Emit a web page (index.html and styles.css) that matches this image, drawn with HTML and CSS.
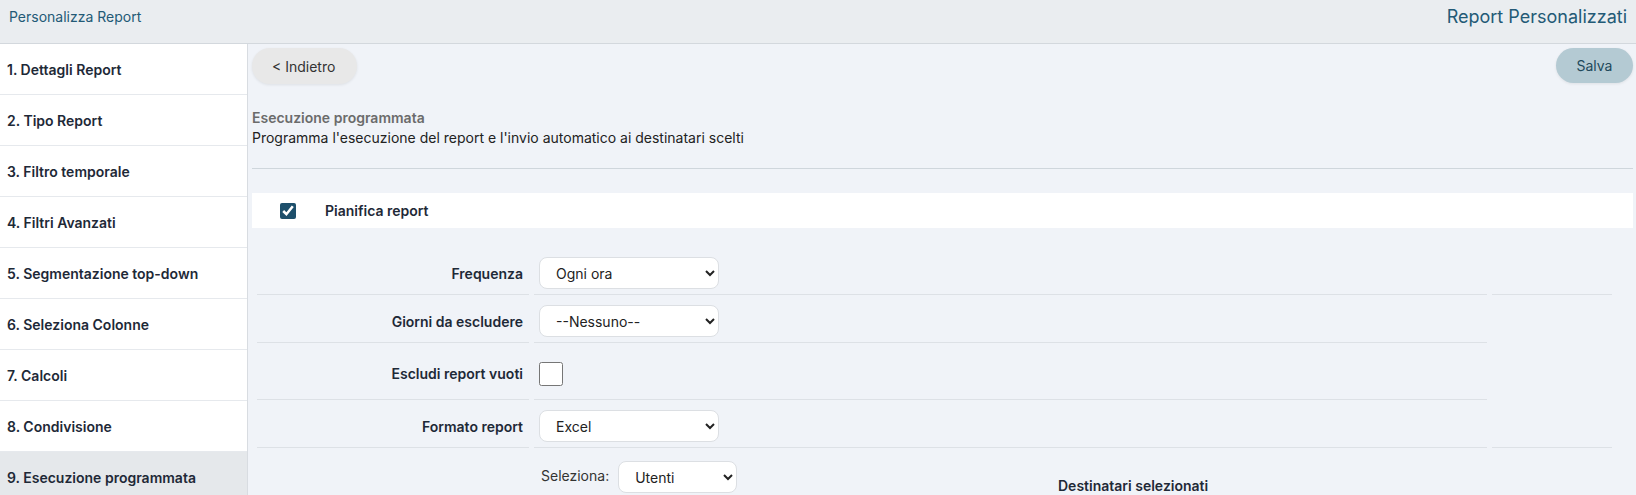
FILE: index.html
```html
<!DOCTYPE html>
<html lang="it">
<head>
    <meta charset="UTF-8">
    <title>Report Personalizzati</title>
    <link rel="stylesheet" href="styles.css">
</head>
<body>
<header class="topbar">
    <span class="crumb">Personalizza Report</span>
    <span class="page-title">Report Personalizzati</span>
</header>
<div class="layout">
    <nav class="steps">
        <ul>
            <li>1. Dettagli Report</li>
            <li>2. Tipo Report</li>
            <li>3. Filtro temporale</li>
            <li>4. Filtri Avanzati</li>
            <li>5. Segmentazione top-down</li>
            <li>6. Seleziona Colonne</li>
            <li>7. Calcoli</li>
            <li>8. Condivisione</li>
            <li class="selected">9. Esecuzione programmata</li>
        </ul>
    </nav>
    <main class="panel">
        <div class="actions">
            <button class="btn-back">&lt; Indietro</button>
            <button class="btn-save">Salva</button>
        </div>
        <div class="section-head">
            <div class="section-title">Esecuzione programmata</div>
            <div class="section-desc">Programma l'esecuzione del report e l'invio automatico ai destinatari scelti</div>
        </div>
        <hr class="divider">
        <div class="plan-row">
            <input type="checkbox" id="pianifica" class="plan-check" checked>
            <label for="pianifica">Pianifica report</label>
        </div>
        <table class="sched">
            <colgroup>
                <col class="c-lbl">
                <col class="c-val">
                <col class="c-extra">
            </colgroup>
            <tr>
                <td class="lbl">Frequenza</td>
                <td class="val">
                    <select class="sel">
                        <option>Ogni ora</option>
                        <option>Ogni giorno</option>
                        <option>Ogni settimana</option>
                    </select>
                </td>
                <td class="extra"></td>
            </tr>
            <tr>
                <td class="lbl">Giorni da escludere</td>
                <td class="val">
                    <select class="sel">
                        <option>--Nessuno--</option>
                        <option>Sabato e domenica</option>
                    </select>
                </td>
                <td class="extra" rowspan="3"></td>
            </tr>
            <tr class="row-check">
                <td class="lbl">Escludi report vuoti</td>
                <td class="val"><input type="checkbox" class="big-check"></td>
            </tr>
            <tr>
                <td class="lbl">Formato report</td>
                <td class="val">
                    <select class="sel">
                        <option>Excel</option>
                        <option>PDF</option>
                        <option>CSV</option>
                    </select>
                </td>
            </tr>
            <tr>
                <td class="empty"></td>
                <td class="recipients" colspan="2">
                    <div class="pick">
                        <div class="pick-left">
                            <span>Seleziona:</span>
                            <select class="sel sel-small">
                                <option>Utenti</option>
                                <option>Gruppi</option>
                            </select>
                        </div>
                        <div class="pick-right">Destinatari selezionati</div>
                    </div>
                </td>
            </tr>
        </table>
    </main>
</div>
</body>
</html>
```

FILE: styles.css
```css
*{
    margin: 0;
    padding: 0;
    box-sizing: border-box;
}
html,body{
    height: 100%;
}
body{
    font-family: Inter, "Liberation Sans", sans-serif;
    font-size: 14px;
    color: #1f2937;
    background: #f0f3f8;
    overflow: hidden;
}
ul{
    list-style: none;
}

/* barra in alto */
.topbar{
    height: 44px;
    background: #eaedf0;
    border-bottom: 1px solid #d3d8dd;
    display: flex;
    justify-content: space-between;
    align-items: center;
    padding: 0 9px 10px 9px;
}
.crumb{
    color: #235a76;
    font-size: 14px;
}
.page-title{
    color: #235a76;
    font-size: 18px;
}

.layout{
    display: flex;
    height: calc(100% - 44px);
}

/* menu dei passi */
.steps{
    width: 248px;
    flex: none;
    background: #fff;
    border-right: 1px solid #d8dce1;
    overflow: hidden;
}
.steps li{
    height: 51px;
    display: flex;
    align-items: center;
    padding-left: 7px;
    border-bottom: 1px solid #e6e9ed;
    font-weight: 600;
    color: #1e2937;
}
.steps li.selected{
    background: #e5e8eb;
    height: 44px;
    padding-top: 7px;
    border-bottom: none;
}

/* contenuto */
.panel{
    flex: 1;
    padding: 4px 3px 0 4px;
    overflow: hidden;
}
.actions{
    display: flex;
    justify-content: space-between;
}
.btn-back,
.btn-save{
    font-family: inherit;
    font-size: 14px;
    border: none;
    border-radius: 18px;
    height: 36px;
    cursor: pointer;
    box-shadow: 0 1px 3px rgba(0,0,0,.08);
}
.btn-back{
    width: 105px;
    background: #e8e8e8;
    color: #333;
    text-align: left;
    padding-left: 20px;
}
.btn-save{
    width: 77px;
    height: 35px;
    background: #b4cad3;
    color: #22495c;
}

.section-head{
    margin-top: 24px;
    line-height: 20px;
}
.section-title{
    font-weight: 600;
    color: #6b6b6b;
}
.section-desc{
    color: #222;
}
.divider{
    border: none;
    border-top: 1px solid #cfd6dc;
    margin-top: 20px;
}

.plan-row{
    margin-top: 24px;
    height: 35px;
    background: #fff;
    display: flex;
    align-items: center;
    padding-left: 28px;
}
.plan-check{
    width: 16px;
    height: 16px;
    accent-color: #1d4f6b;
}
.plan-row label{
    margin-left: 29px;
    font-weight: 600;
}

/* tabella pianificazione */
.sched{
    margin-top: 19px;
    width: 1365px;
    table-layout: fixed;
    border-spacing: 5px;
}
.c-lbl{
    width: 272px;
}
.c-extra{
    width: 120px;
}
.sched td{
    border-bottom: 1px solid #dde1e6;
    padding: 5px;
    height: 43px;
}
.sched .lbl{
    text-align: right;
    font-weight: 600;
    padding-right: 6px;
    color: #1e2937;
}
.sched .row-check td{
    height: 52px;
}
.sched td.empty,
.sched td.recipients{
    border-bottom: none;
    vertical-align: top;
    padding-top: 8px;
}
.sel{
    font-family: inherit;
    font-size: 14px;
    color: #222;
    width: 180px;
    height: 32px;
    padding: 0 10px 0 12px;
    border: 1px solid #dcdfe3;
    border-radius: 8px;
    background: #fff;
    vertical-align: middle;
}
.sel-small{
    width: 119px;
    margin-left: 5px;
}
.big-check{
    width: 24px;
    height: 24px;
    display: block;
}
.pick{
    display: flex;
}
.pick-left{
    width: 519px;
    padding-left: 2px;
    color: #333;
}
.pick-right{
    margin-top: 15px;
    font-weight: 600;
    line-height: 20px;
}
```
